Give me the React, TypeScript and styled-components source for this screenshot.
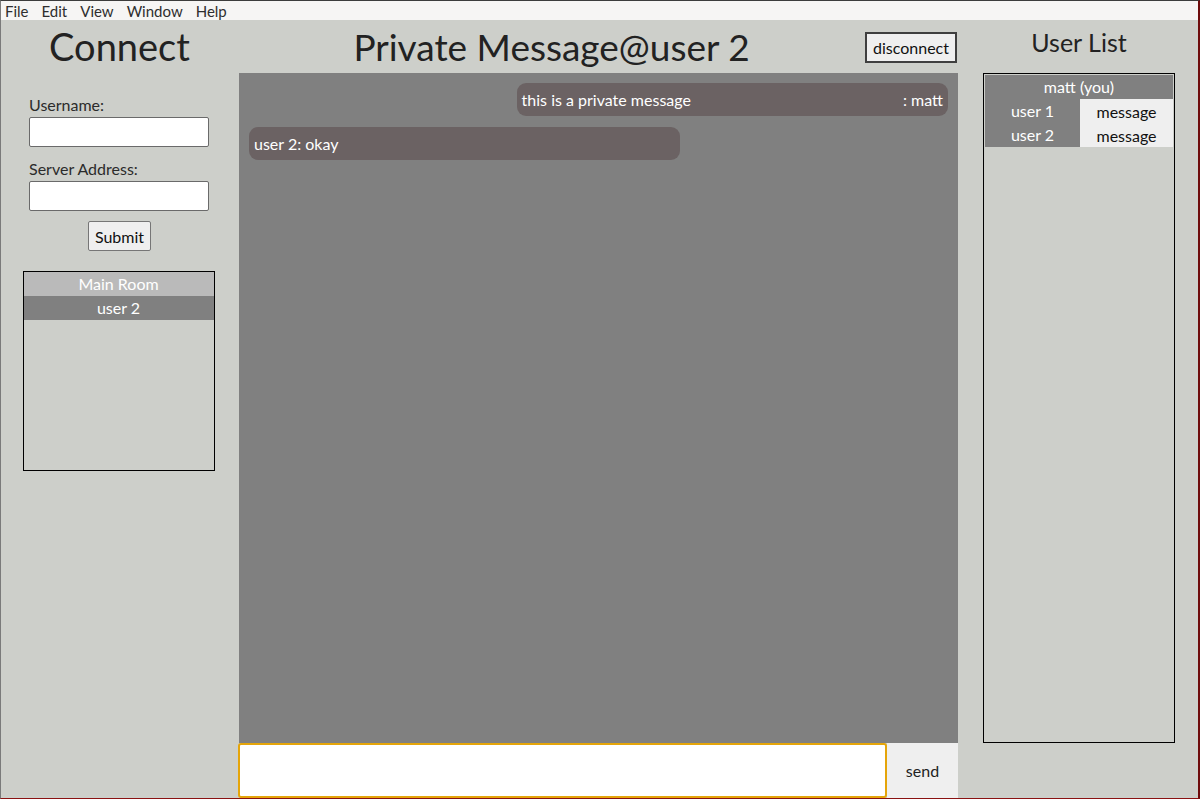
import styled, { createGlobalStyle } from 'styled-components';

const GlobalStyle = createGlobalStyle`
  html, body {
    margin: 0;
    padding: 0;
    height: 100%;
    overflow: hidden;
  }
  #root {
    height: 100%;
  }
  * {
    box-sizing: border-box;
  }
`;

const FONT = `'Lato', 'Noto Sans', sans-serif`;

const Frame = styled.div`
  width: 100vw;
  height: 100vh;
  display: flex;
  flex-direction: column;
  font-family: ${FONT};
  border-top: 1px solid #3c3c3c;
  border-left: 1px solid #7a7a7a;
  border-right: 2px solid #6e0c0c;
  border-bottom: 1px solid #8a1212;
  background: #cdcfca;
  color: #222;
`;

const MenuBar = styled.div`
  height: 19px;
  flex: none;
  display: flex;
  align-items: center;
  gap: 13px;
  padding-left: 4px;
  background: #f6f5f4;
  font-size: 15px;
  color: #2e2e2e;
`;

const Body = styled.div`
  flex: 1;
  display: grid;
  grid-template-columns: 237px 720px 1fr;
  min-height: 0;
`;

const LeftPanel = styled.div`
  display: flex;
  flex-direction: column;
  align-items: center;
`;

const BigTitle = styled.div`
  font-size: 38px;
  line-height: 53px;
  font-weight: 400;
  color: #222;
`;

const Form = styled.div`
  align-self: stretch;
  display: flex;
  flex-direction: column;
  padding: 22px 0 0 28px;
`;

const Label = styled.label`
  font-size: 16px;
  line-height: 20px;
  margin-bottom: 2px;
  color: #2b2b2b;
`;

const TextInput = styled.input`
  width: 180px;
  height: 30px;
  border: 1px solid #6a6a6a;
  border-radius: 2px;
  background: #fff;
  margin-bottom: 12px;
`;

const SubmitButton = styled.button`
  align-self: center;
  margin: -2px 0 0 -28px;
  height: 30px;
  padding: 0 6px;
  font-family: ${FONT};
  font-size: 16px;
  background: #efefef;
  border: 1px solid #767676;
  border-radius: 2px;
  color: #111;
`;

const RoomBox = styled.div`
  margin: 20px 2px 0 0;
  width: 192px;
  height: 200px;
  border: 1px solid #000;
  display: flex;
  flex-direction: column;
`;

const ListRow = styled.div<{ $bg: string }>`
  height: 24px;
  line-height: 24px;
  text-align: center;
  font-size: 16px;
  color: #fff;
  background: ${(p) => p.$bg};
`;

const CenterPanel = styled.div`
  display: flex;
  flex-direction: column;
  min-height: 0;
`;

const CenterHeader = styled.div`
  height: 53px;
  flex: none;
  display: flex;
  align-items: center;
`;

const CenterTitle = styled.div`
  flex: 1;
  text-align: center;
  font-size: 37px;
  line-height: 53px;
  color: #222;
`;

const DisconnectButton = styled.button`
  height: 31px;
  margin: 2px 1px 0 0;
  padding: 0 6px;
  font-family: ${FONT};
  font-size: 16px;
  color: #111;
  background: #efefef;
  border: 2px solid #3f3f3f;
  border-radius: 0;
`;

const ChatArea = styled.div`
  flex: 1;
  background: #808080;
  padding: 10px;
  display: flex;
  flex-direction: column;
  gap: 11px;
  margin-left: 1px;
`;

const Bubble = styled.div<{ $mine?: boolean }>`
  width: calc((100% + 20px) * 0.6);
  align-self: ${(p) => (p.$mine ? 'flex-end' : 'flex-start')};
  height: 33px;
  display: flex;
  align-items: center;
  justify-content: space-between;
  padding: 0 5px;
  background: #6b6263;
  border-radius: 9px;
  color: #fff;
  font-size: 16px;
`;

const InputRow = styled.div`
  height: 55px;
  flex: none;
  display: flex;
`;

const ChatInput = styled.input`
  flex: 1;
  height: 100%;
  border: 2px solid #e5a50a;
  border-radius: 3px;
  background: #fff;
  outline: none;
  font-family: ${FONT};
  font-size: 16px;
`;

const SendButton = styled.button`
  width: 71px;
  height: 100%;
  border: none;
  background: #efefef;
  font-family: ${FONT};
  font-size: 16px;
  color: #222;
`;

const RightPanel = styled.div`
  display: flex;
  flex-direction: column;
  align-items: center;
  padding: 0 0 55px 2px;
`;

const SideTitle = styled.div`
  font-size: 25px;
  line-height: 44px;
  height: 53px;
  color: #222;
`;

const UserBox = styled.div`
  flex: 1;
  width: 192px;
  border: 1px solid #000;
  padding: 1px;
  display: flex;
  flex-direction: column;
`;

const UserRow = styled.div`
  display: grid;
  grid-template-columns: 95px 1fr;
  height: 24px;
`;

const UserName = styled.div`
  background: #808080;
  color: #fff;
  font-size: 16px;
  line-height: 24px;
  text-align: center;
`;

const MessageButton = styled.button`
  border: none;
  background: #efefef;
  font-family: ${FONT};
  font-size: 16px;
  color: #111;
  padding: 0;
`;

const users = ['user 1', 'user 2'];

export default function App() {
  return (
    <>
      <GlobalStyle />
      <Frame>
        <MenuBar>
          <span>File</span>
          <span>Edit</span>
          <span>View</span>
          <span>Window</span>
          <span>Help</span>
        </MenuBar>
        <Body>
          <LeftPanel>
            <BigTitle>Connect</BigTitle>
            <Form>
              <Label>Username:</Label>
              <TextInput />
              <Label>Server Address:</Label>
              <TextInput />
              <SubmitButton>Submit</SubmitButton>
            </Form>
            <RoomBox>
              <ListRow $bg="#bababa">Main Room</ListRow>
              <ListRow $bg="#808080">user 2</ListRow>
            </RoomBox>
          </LeftPanel>
          <CenterPanel>
            <CenterHeader>
              <CenterTitle>Private Message@user 2</CenterTitle>
              <DisconnectButton>disconnect</DisconnectButton>
            </CenterHeader>
            <ChatArea>
              <Bubble $mine>
                <span>this is a private message</span>
                <span>: matt</span>
              </Bubble>
              <Bubble>
                <span>user 2: okay</span>
              </Bubble>
            </ChatArea>
            <InputRow>
              <ChatInput autoFocus />
              <SendButton>send</SendButton>
            </InputRow>
          </CenterPanel>
          <RightPanel>
            <SideTitle>User List</SideTitle>
            <UserBox>
              <ListRow $bg="#808080">matt (you)</ListRow>
              {users.map((u) => (
                <UserRow key={u}>
                  <UserName>{u}</UserName>
                  <MessageButton>message</MessageButton>
                </UserRow>
              ))}
            </UserBox>
          </RightPanel>
        </Body>
      </Frame>
    </>
  );
}
